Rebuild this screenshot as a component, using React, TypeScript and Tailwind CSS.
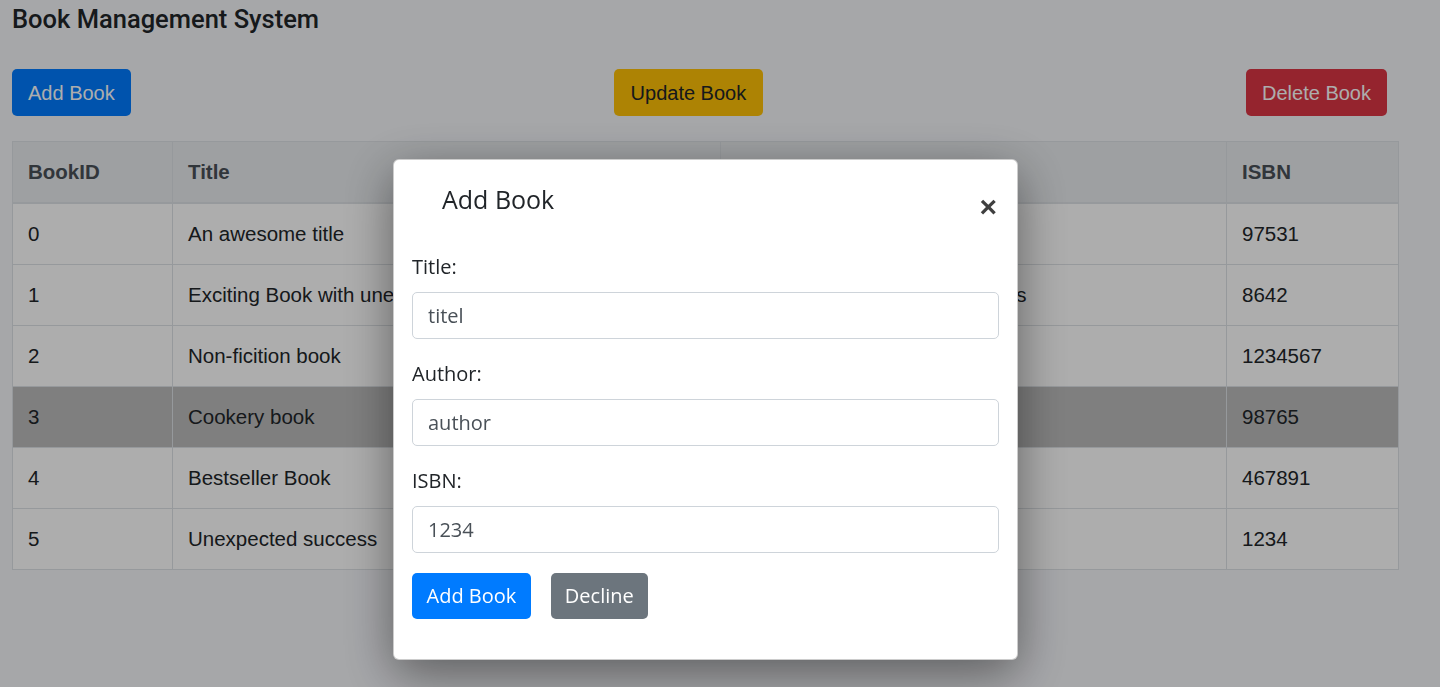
const books = [
  { id: 0, title: 'An awesome title', author: 'John Doe', isbn: '97531' },
  { id: 1, title: 'Exciting Book with unexpected ending', author: 'Team of some unknown authors', isbn: '8642' },
  { id: 2, title: 'Non-ficition book', author: 'Jane Smith', isbn: '1234567' },
  { id: 3, title: 'Cookery book', author: 'Chef Max', isbn: '98765' },
  { id: 4, title: 'Bestseller Book', author: 'Famous Writer', isbn: '467891' },
  { id: 5, title: 'Unexpected success', author: 'Newcomer', isbn: '1234' },
];

const selectedId = 3;

function Field({ label, value }: { label: string; value: string }) {
  return (
    <div className="mb-[20px]">
      <label className="block mb-[10px] text-[20px] leading-[30px] text-[#212529]">{label}</label>
      <input
        readOnly
        value={value}
        className="block w-full h-[47px] px-[15px] text-[20px] text-[#495057] bg-white border border-[#ced4da] rounded-[5px] outline-none"
      />
    </div>
  );
}

function AddBookModal() {
  return (
    <div className="fixed left-[393px] top-[159px] w-[625px] bg-white border border-black/20 rounded-[6px] shadow-[0_14px_50px_rgba(0,0,0,0.45)] font-['Open_Sans',sans-serif]">
      <div className="flex items-start justify-between pt-[24px] pb-[17px] pl-[48px] pr-[20px]">
        <h5 className="text-[25px] leading-[30px] font-medium text-[#212529]">Add Book</h5>
        <span className="mt-[8px] -mb-[8px] text-[30px] leading-none font-bold text-[#3f3f3f] font-['Liberation_Sans',Arial,sans-serif]">×</span>
      </div>
      <div className="px-[18px] pt-[21px] pb-[40px]">
        <Field label="Title:" value="titel" />
        <Field label="Author:" value="author" />
        <Field label="ISBN:" value="1234" />
        <div className="flex gap-[20px]">
          <button className="h-[46px] px-[14.5px] rounded-[5px] bg-[#007bff] text-white text-[20px]">Add Book</button>
          <button className="h-[46px] px-[14px] rounded-[5px] bg-[#6c757d] text-white text-[20px]">Decline</button>
        </div>
      </div>
    </div>
  );
}

function App() {
  return (
    <div className="min-h-screen bg-[#f5f6fa] px-[12px] font-['Liberation_Sans',Arial,sans-serif] text-[#212529]">
      <h1 className="pt-[4px] text-[25.5px] leading-[30px] font-medium font-['Roboto',sans-serif] text-[#212529]">
        Book Management System
      </h1>

      <div className="mt-[35px] w-[1375px] flex justify-between">
        <button className="h-[47px] px-[16px] rounded-[5px] bg-[#007bff] text-white text-[20px]">Add Book</button>
        <button className="h-[47px] px-[16.5px] rounded-[5px] bg-[#ffc107] text-[#212529] text-[20px]">Update Book</button>
        <button className="h-[47px] px-[16px] rounded-[5px] bg-[#dc3545] text-white text-[20px]">Delete Book</button>
      </div>

      <table className="mt-[25px] w-[1386px] table-fixed border-collapse bg-white text-[20.5px] leading-[30px]">
        <thead>
          <tr className="bg-[#e9ecef] text-[#495057] text-left">
            <th className="w-[160px] px-[15px] py-[15px] border border-[#dee2e6] border-b-2 font-bold">BookID</th>
            <th className="w-[548px] px-[15px] py-[15px] border border-[#dee2e6] border-b-2 font-bold">Title</th>
            <th className="w-[506px] px-[15px] py-[15px] border border-[#dee2e6] border-b-2 font-bold">Author</th>
            <th className="w-[172px] px-[15px] py-[15px] border border-[#dee2e6] border-b-2 font-bold">ISBN</th>
          </tr>
        </thead>
        <tbody>
          {books.map((b) => (
            <tr key={b.id} className={b.id === selectedId ? 'bg-[#bcbcbc]' : ''}>
              <td className="px-[15px] py-[15px] border border-[#dee2e6]">{b.id}</td>
              <td className="px-[15px] py-[15px] border border-[#dee2e6] whitespace-nowrap overflow-hidden">{b.title}</td>
              <td className="px-[15px] py-[15px] border border-[#dee2e6] whitespace-nowrap overflow-hidden">{b.author}</td>
              <td className="px-[15px] py-[15px] border border-[#dee2e6]">{b.isbn}</td>
            </tr>
          ))}
        </tbody>
      </table>

      {/* modal backdrop */}
      <div className="fixed inset-0 bg-black/[0.32]" />
      <AddBookModal />
    </div>
  );
}

export default App;
